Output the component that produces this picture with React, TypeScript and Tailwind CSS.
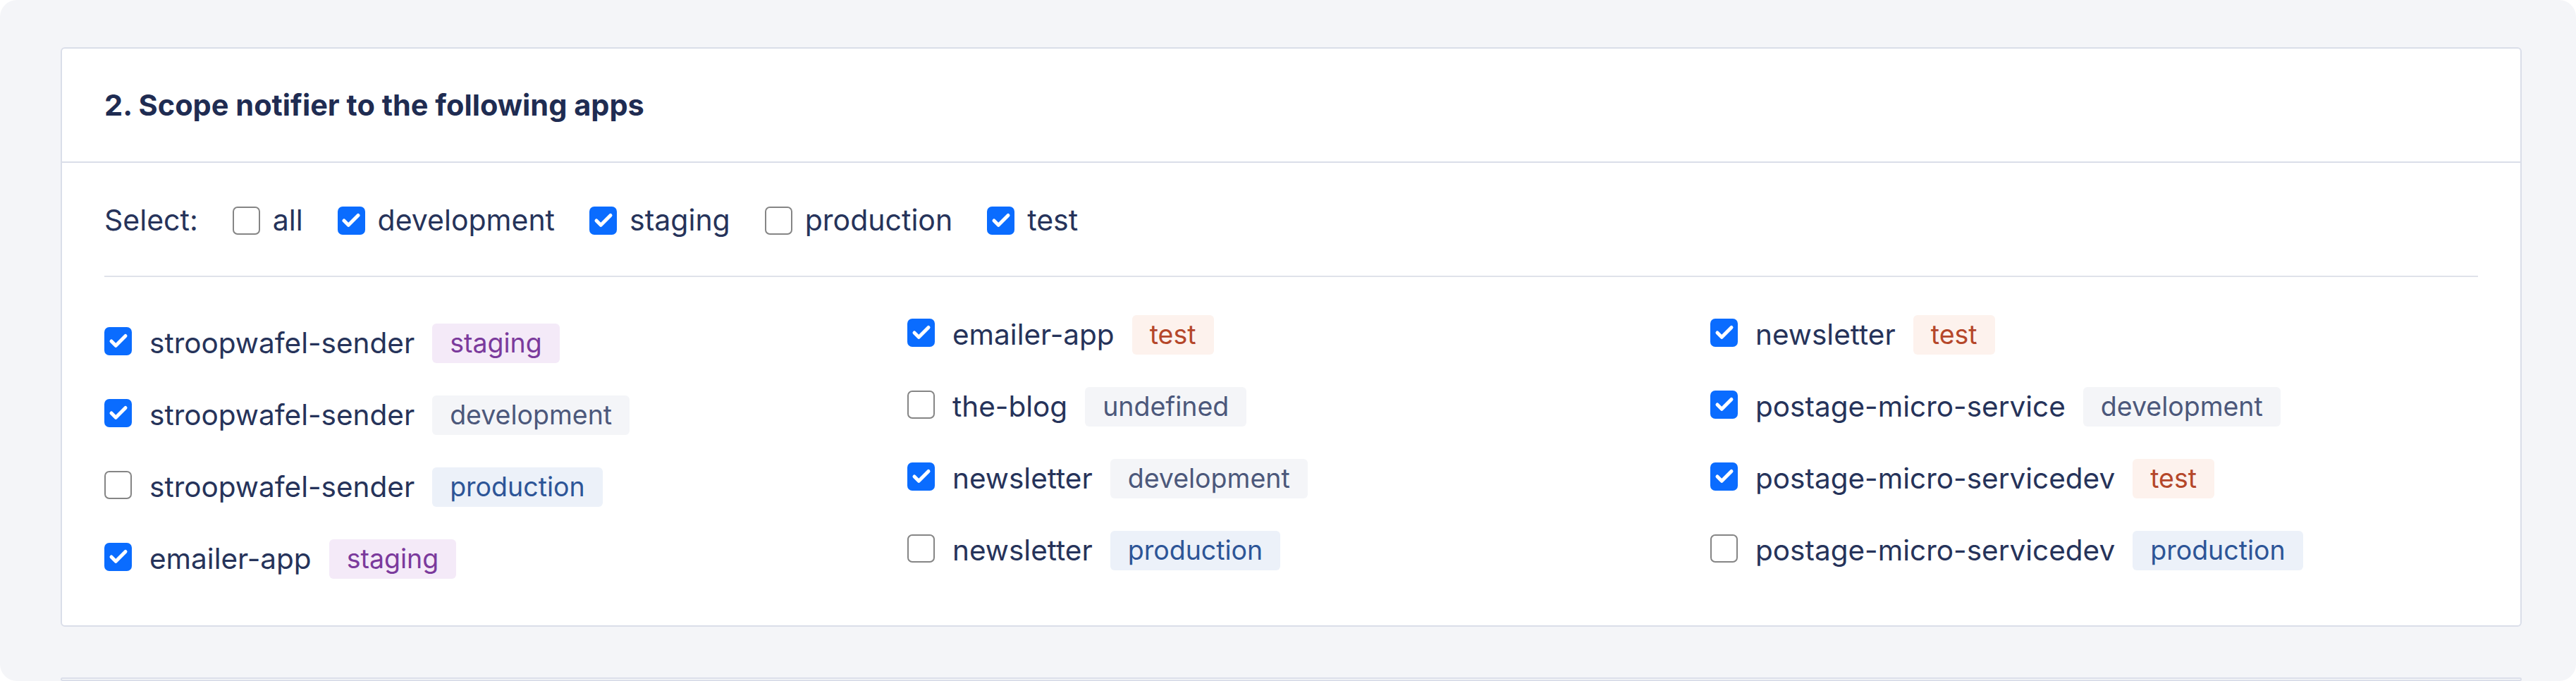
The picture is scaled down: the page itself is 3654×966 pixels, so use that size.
import { Check } from 'lucide-react';

type Env = 'staging' | 'development' | 'production' | 'test' | 'undefined';

const badgeStyles: Record<Env, string> = {
  staging: 'bg-[#f4eaf8] text-[#7b3a9c]',
  development: 'bg-[#f4f5f8] text-[#4c587b]',
  undefined: 'bg-[#f4f5f8] text-[#4c587b]',
  production: 'bg-[#ecf1f9] text-[#2d5597]',
  test: 'bg-[#fdf2ed] text-[#b5472a]',
};

type App = { name: string; env: Env; checked: boolean };

const columns: App[][] = [
  [
    { name: 'stroopwafel-sender', env: 'staging', checked: true },
    { name: 'stroopwafel-sender', env: 'development', checked: true },
    { name: 'stroopwafel-sender', env: 'production', checked: false },
    { name: 'emailer-app', env: 'staging', checked: true },
  ],
  [
    { name: 'emailer-app', env: 'test', checked: true },
    { name: 'the-blog', env: 'undefined', checked: false },
    { name: 'newsletter', env: 'development', checked: true },
    { name: 'newsletter', env: 'production', checked: false },
  ],
  [
    { name: 'newsletter', env: 'test', checked: true },
    { name: 'postage-micro-service', env: 'development', checked: true },
    { name: 'postage-micro-servicedev', env: 'test', checked: true },
    { name: 'postage-micro-servicedev', env: 'production', checked: false },
  ],
];

const filters = [
  { label: 'all', checked: false },
  { label: 'development', checked: true },
  { label: 'staging', checked: true },
  { label: 'production', checked: false },
  { label: 'test', checked: true },
];

function Box({ checked }: { checked: boolean }) {
  if (checked) {
    return (
      <span className="flex h-[40px] w-[39px] shrink-0 items-center justify-center rounded-[7px] bg-[#0a6cff]">
        <Check className="h-[30px] w-[30px] text-white" strokeWidth={4} />
      </span>
    );
  }
  return (
    <span className="block h-[40px] w-[39px] shrink-0 rounded-[7px] border-[2.5px] border-[#858585] bg-white" />
  );
}

function Badge({ env }: { env: Env }) {
  return (
    <span
      className={`flex h-[56px] items-center rounded-[6px] px-[25px] text-[37.5px] leading-none ${badgeStyles[env]}`}
    >
      {env}
    </span>
  );
}

export default function App() {
  return (
    <div
      className="h-[966px] w-[3654px] overflow-hidden bg-white text-[#26335a]"
      style={{ fontFamily: 'Inter, "Noto Sans", sans-serif' }}
    >
      <div className="flex h-full flex-col gap-[72px] rounded-[24px] bg-[#f4f5f8] pl-[86px] pr-[77px] pt-[67px]">
        <div className="rounded-[6px] border-2 border-[#dadee9] bg-white">
          <div className="flex h-[162px] items-center border-b-2 border-[#dadee9] px-[60px]">
            <h2 className="text-[41.5px] font-bold text-[#1f2c52]">
              2. Scope notifier to the following apps
            </h2>
          </div>
          <div className="px-[60px] pb-[66px] pt-[52px]">
            <div className="flex h-[60px] items-center gap-[49px] text-[41px]">
              <span>Select:</span>
              {filters.map((f) => (
                <label key={f.label} className="flex items-center gap-[18px]">
                  <Box checked={f.checked} />
                  <span>{f.label}</span>
                </label>
              ))}
            </div>
            <div className="mt-[48px] h-[2px] bg-[#dfe2ea]" />
            <div className="grid grid-cols-3 items-start gap-x-[50px] pt-[54px]">
              {columns.map((col, ci) => (
                <div
                  key={ci}
                  className={`flex flex-col gap-[46px] ${ci === 0 ? 'mt-[12px]' : ''}`}
                >
                  {col.map((app, i) => (
                    <div key={i} className="flex h-[56px] items-center gap-[25px] text-[40.5px]">
                      <span className="mb-[6px] block">
                        <Box checked={app.checked} />
                      </span>
                      <span>{app.name}</span>
                      <Badge env={app.env} />
                    </div>
                  ))}
                </div>
              ))}
            </div>
          </div>
        </div>
        <div className="h-[200px] rounded-[6px] border-2 border-[#dadee9] bg-white" />
      </div>
    </div>
  );
}
